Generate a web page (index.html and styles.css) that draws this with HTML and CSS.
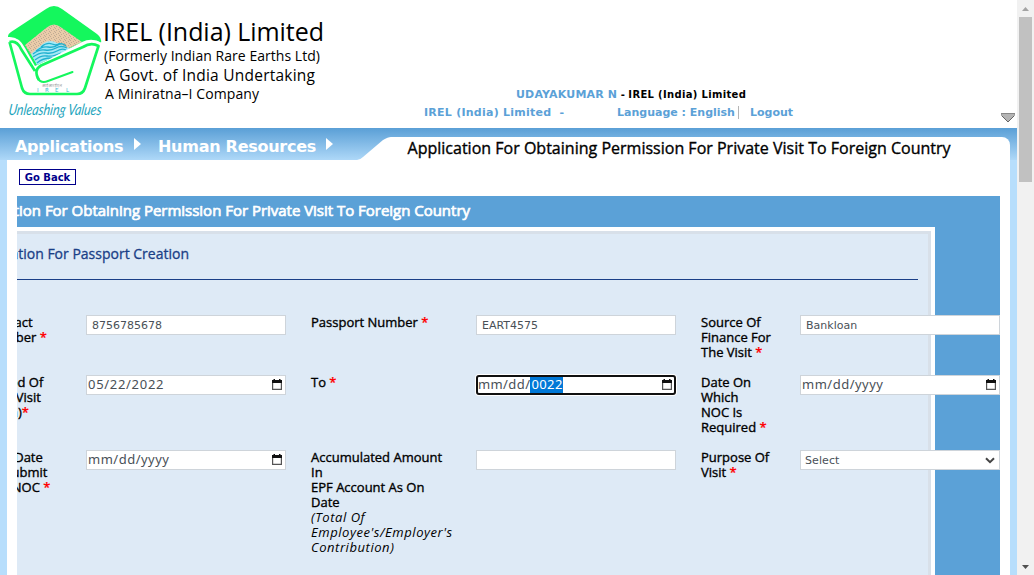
FILE: index.html
```html
<!DOCTYPE html>
<html lang="en">
<head>
<meta charset="utf-8">
<title>Application For Obtaining Permission For Private Visit To Foreign Country</title>
<link rel="stylesheet" href="styles.css">
</head>
<body>
<div class="page">
  <header class="header">
    <svg class="logo" width="340" height="128" viewBox="0 0 340 128">
      <defs>
        <pattern id="sand" width="5" height="4" patternUnits="userSpaceOnUse">
          <rect width="5" height="4" fill="#e9cba9"/>
          <path d="M0 .5h1M3 1.5h1M1 2.5h1M4 3.5h1" stroke="#c0ab94" stroke-width="1"/>
        </pattern>
      </defs>
      <path d="M8 36 Q8 34 11 32 L46 9 Q54 3 62 9 L97 34 Q102 38 101 43 Q94 38 84 44 L35 66 L25 48 Q19 36 8 37Z" fill="#14f75d"/>
      <path d="M25 45 L46 28 Q54 21 62 28 L82 42 L37 64Z" fill="url(#sand)"/>
      <path d="M31 54 L44 43 Q50 39 57 43 L71 49 L37 65Z" fill="#a5e8f5"/>
      <path d="M33 54 Q39 49 45 50 T56 48 T67 48 M33 57 Q40 52 46 53 T57 51 T66 50 M35 60 Q41 55 47 56 T61 53 M36 51 Q42 46 48 47 T58 45 T66 46 M41 47 Q47 42 52 44 T60 43 M37 63 Q42 58 52 58" fill="none" stroke="#20b0cf" stroke-width="1.300"/>
      <path d="M8 38 Q18 36 23 47 L36 71 Q35 66 42 63 L82 42 Q92 37 102 43 L86 89 Q84 95 78 95 H31 Q25 95 23 89Z" fill="#fff"/>
      <path d="M9.500 42 Q17 40 21 49 L35 71 M39 80 Q33 70 41 65.500 L83 47 Q91 42 98.500 46 L85 88 Q83 94 77 94 H30 Q24 94 22 88 L9.500 42" fill="none" stroke="#14f75d" stroke-width="2.700" stroke-linejoin="round"/>
      <path d="M72.500 72 L48 81 Q41 84 37.500 78" fill="none" stroke="#14f75d" stroke-width="2" stroke-linecap="round"/>
      <text class="tiny" x="42" y="87" textLength="20">आईआरईएल</text>
      <g class="mark"><text x="37" y="92">I</text><text x="45" y="92">R</text><text x="55" y="92">E</text><text x="66" y="92">L</text></g>
      <text class="slogan" transform="translate(8 115) skewX(-8)" textLength="93" lengthAdjust="spacingAndGlyphs">Unleashing Values</text>
      <text class="name" x="103" y="41" font-size="25" textLength="221">IREL (India) Limited</text>
      <text class="name" x="104" y="61" font-size="14" textLength="216">(Formerly Indian Rare Earths Ltd)</text>
      <text class="name" x="105" y="81" font-size="15.500" textLength="210">A Govt. of India Undertaking</text>
      <text class="name" x="105" y="99" font-size="14" textLength="154">A Miniratna–I Company</text>
    </svg>
    <div class="account">
      <div class="user"><b>UDAYAKUMAR N</b> - <span>IREL (India) Limited</span></div>
      <div class="links"><span class="org">IREL (India) Limited&nbsp; -</span><span class="lang">Language : English</span><span class="logout">Logout</span></div>
    </div>
    <svg class="toggle" width="14" height="10" viewBox="0 0 14 10"><path d="M.5 .5H13.500V2.500L7 9L.5 2.500Z" fill="#b4b4b4" stroke="#999"/><path d="M0 .5H14" stroke="#888"/><path d="M1 3L7 9L13 3" fill="none" stroke="#666"/></svg>
  </header>

  <div class="band">
    <nav class="menu">
      <span class="m1">Applications</span><i class="arrow"></i>
      <span class="m2">Human Resources</span><i class="arrow"></i>
    </nav>
    <svg class="slope" width="34" height="32" viewBox="0 0 34 32"><path d="M0 32 Q3 32 6 29 L26 12 Q31 9 34 9 V32Z" fill="#fff"/></svg>
    <h1 class="title"><span>Application For Obtaining Permission For Private Visit To Foreign Country</span></h1>
  </div>

  <main class="content">
    <button class="back">Go Back</button>
    <section class="viewport">
      <h2 class="bar"><span>Application For Obtaining Permission For Private Visit To Foreign Country</span></h2>
      <div class="panel">
        <h3 class="sub"><span>Application For Passport Creation</span></h3>
        <form class="grid">
          <label class="first">Contact<br>Number <em>*</em></label>
          <div class="field txt">8756785678</div>
          <label>Passport Number <em>*</em></label>
          <div class="field txt">EART4575</div>
          <label>Source Of<br>Finance For<br>The Visit <em>*</em></label>
          <div class="field txt">Bankloan</div>

          <label class="first">Period Of<br><span class="visit">The Visit</span><br>From)<em>*</em></label>
          <div class="field date"><span class="num">05/22/2022</span><svg class="cal" width="10" height="11" viewBox="0 0 10 11"><path d="M.6 2V10.400H9.400V2" fill="none" stroke="#555" stroke-width="1.200"/><path d="M0 1H10V4H0ZM1.500 0h1.500v1.500H1.500zM7 0h1.500v1.500H7z" fill="#111"/></svg></div>
          <label>To <em>*</em></label>
          <div class="field date focus"><span>mm/dd/</span><mark>0022</mark><svg class="cal" width="10" height="11" viewBox="0 0 10 11"><path d="M.6 2V10.400H9.400V2" fill="none" stroke="#555" stroke-width="1.200"/><path d="M0 1H10V4H0ZM1.500 0h1.500v1.500H1.500zM7 0h1.500v1.500H7z" fill="#111"/></svg></div>
          <label>Date On<br>Which<br>NOC Is<br>Required <em>*</em></label>
          <div class="field date"><span>mm/dd/yyyy</span><svg class="cal" width="10" height="11" viewBox="0 0 10 11"><path d="M.6 2V10.400H9.400V2" fill="none" stroke="#555" stroke-width="1.200"/><path d="M0 1H10V4H0ZM1.500 0h1.500v1.500H1.500zM7 0h1.500v1.500H7z" fill="#111"/></svg></div>

          <label class="first">Last Date<br>To Submit<br>The NOC <em>*</em></label>
          <div class="field date"><span>mm/dd/yyyy</span><svg class="cal" width="10" height="11" viewBox="0 0 10 11"><path d="M.6 2V10.400H9.400V2" fill="none" stroke="#555" stroke-width="1.200"/><path d="M0 1H10V4H0ZM1.500 0h1.500v1.500H1.500zM7 0h1.500v1.500H7z" fill="#111"/></svg></div>
          <label>Accumulated Amount<br>In<br>EPF Account As On<br>Date<br><i>(Total Of<br>Employee's/Employer's<br>Contribution)</i></label>
          <div class="field"></div>
          <label>Purpose Of<br>Visit <em>*</em></label>
          <div class="field select"><span>Select</span><svg width="10" height="7" viewBox="0 0 10 7"><path d="M1 1.200L5 5.200L9 1.200" fill="none" stroke="#444" stroke-width="2"/></svg></div>
        </form>
      </div>
    </section>
  </main>
</div>
<div class="scroll">
  <svg width="17" height="17" viewBox="0 0 17 17"><path d="M5 11L8.500 7L12 11Z" fill="#a3a3a3"/></svg>
  <div class="thumb"></div>
  <svg class="down" width="17" height="17" viewBox="0 0 17 17"><path d="M5 7L8.500 11L12 7Z" fill="#505050"/></svg>
</div>
</body>
</html>
```

FILE: styles.css
```css
* { box-sizing: border-box; }
body {
  margin: 0; width: 1034px; height: 575px; overflow: hidden; display: flex;
  background: #fff; color: #000; font-family: "Open Sans", "Noto Sans", sans-serif;
}
.page { width: 1017px; height: 575px; display: flex; flex-direction: column; }
.header { height: 128px; display: flex; flex: none; }
.logo { flex: none; }
.name { font-family: "Open Sans", sans-serif; }
.mark { font: 5.5px "DejaVu Sans", sans-serif; fill: #35b8cf; }
.tiny { font: 4px "Noto Sans", sans-serif; fill: #999; }
.slogan { font: italic 15.5px Lato, sans-serif; fill: #1fa5bd; }
.account { width: 661px; padding-top: 86px; font: bold 11px/18px "DejaVu Sans", sans-serif; }
.user { padding-left: 176px; white-space: nowrap; font-size: 10px; height: 17px; line-height: 17px; }
.user b { font-size: 11px; color: #5ba1d7; letter-spacing: .17px; }
.user span { letter-spacing: .33px; }
.links { display: flex; color: #5ba1d7; padding: 1px 0 0 84px; white-space: nowrap; }
.org { width: 193px; letter-spacing: .25px; }
.lang { width: 122px; height: 13px; line-height: 13px; margin-top: 2px; border-right: 1px solid #b5b5b5; }
.logout { padding-left: 11px; }
.toggle { margin-top: 113px; flex: none; }

.band { height: 32px; flex: none; display: flex; background: linear-gradient(#5a9fd6, #aed8f8); }
.menu { width: 357px; padding: 5px 0 0 15px; display: flex; align-items: center; color: #fff; font: bold 16px/20px "DejaVu Sans", sans-serif; letter-spacing: -.27px; }
.m1 { width: 119px; white-space: nowrap; }
.m2 { width: 168px; white-space: nowrap; }
.arrow { width: 7px; border-left: 7px solid #fff; border-top: 6px solid transparent; border-bottom: 6px solid transparent; margin-bottom: 5px; }
.menu .arrow:nth-of-type(1) { margin-right: 17px; }
.slope { flex: none; }
.title { margin: 9px 0 0; width: 619px; height: 23px; padding-left: 16.5px; background: #fff; border-top-right-radius: 8px; font-size: 16px; font-weight: 400; line-height: 23px; white-space: nowrap; letter-spacing: .01px; -webkit-text-stroke: .35px #000; }

.content { flex: 1; min-height: 0; border: solid #b7defc; border-width: 0 7px; padding: 9px 10px 0; background: #fff; display: flex; flex-direction: column; }
.back { align-self: flex-start; margin: 0 0 11px 2px; width: 57px; height: 16px; padding: 1px 0 0; border: 1px solid #00008b; background: #fff; color: #00008b; font: bold 10px/13px "DejaVu Sans", sans-serif; }
.viewport { width: 983px; flex: 1; min-height: 0; overflow: hidden; background: #5ba1d7; }
.bar { margin: 0; height: 31px; width: 453px; display: flex; justify-content: flex-end; color: #fff; font-size: 15px; line-height: 29px; font-weight: 400; white-space: nowrap; letter-spacing: -.02px; -webkit-text-stroke: .7px #fff; }
.panel { width: 918px; height: 500px; border: solid #fff; border-width: 4px 4px 0 0; background: #deeaf6; box-shadow: inset -3px 3px #d8e0e9; }
.sub { margin: 0; height: 49px; width: 901px; border-bottom: 1px solid #1a3f87; display: flex; justify-content: flex-end; padding-right: 729px; color: #1a3f87; font-size: 14px; font-weight: 400; line-height: 45px; white-space: nowrap; -webkit-text-stroke: .3px #1a3f87; }
.grid { margin: 35px 0 0 -32px; display: grid; width: 1016px; grid-template-columns: 101px 225px 165px 225px 99px 200px; grid-template-rows: 60px 75px 130px; }
label { font-size: 13px; line-height: 15px; white-space: nowrap; -webkit-text-stroke: .35px #000; }
label em { font-style: normal; font-weight: 600; color: #f00; -webkit-text-stroke: .2px #f00; }
label i { letter-spacing: .55px; -webkit-text-stroke: 0; }
.first { padding-left: 1px; }
.visit { padding-left: 4px; }
.field { width: 200px; height: 20px; border: 1px solid #ced4da; background: #fff; color: #495057; display: flex; align-items: center; font: 11px/18px "DejaVu Sans", sans-serif; white-space: nowrap; }
.txt { padding: 1px 0 0 5px; }
.date { padding: 0 3px 1px 1px; font: 13px/17px "Noto Sans", sans-serif; letter-spacing: .5px; }
.num { letter-spacing: .7px; }
.cal { margin-left: auto; }
.focus { border: 2px solid #101010; border-radius: 3px; padding: 0 2px 1px 0; box-shadow: 0 0 0 1px #fff; letter-spacing: .4px; }
.focus mark { background: #0078d7; color: #fff; height: 16px; line-height: 15px; padding-left: 1px; }
.select { padding: 0 4px; justify-content: space-between; }
.select span { padding-top: 1px; letter-spacing: .1px; }

.scroll { width: 17px; height: 575px; background: #f1f1f1; display: flex; flex-direction: column; }
.thumb { height: 165px; margin: 0 2px; background: #c1c1c1; }
.down { margin-top: auto; }
```
